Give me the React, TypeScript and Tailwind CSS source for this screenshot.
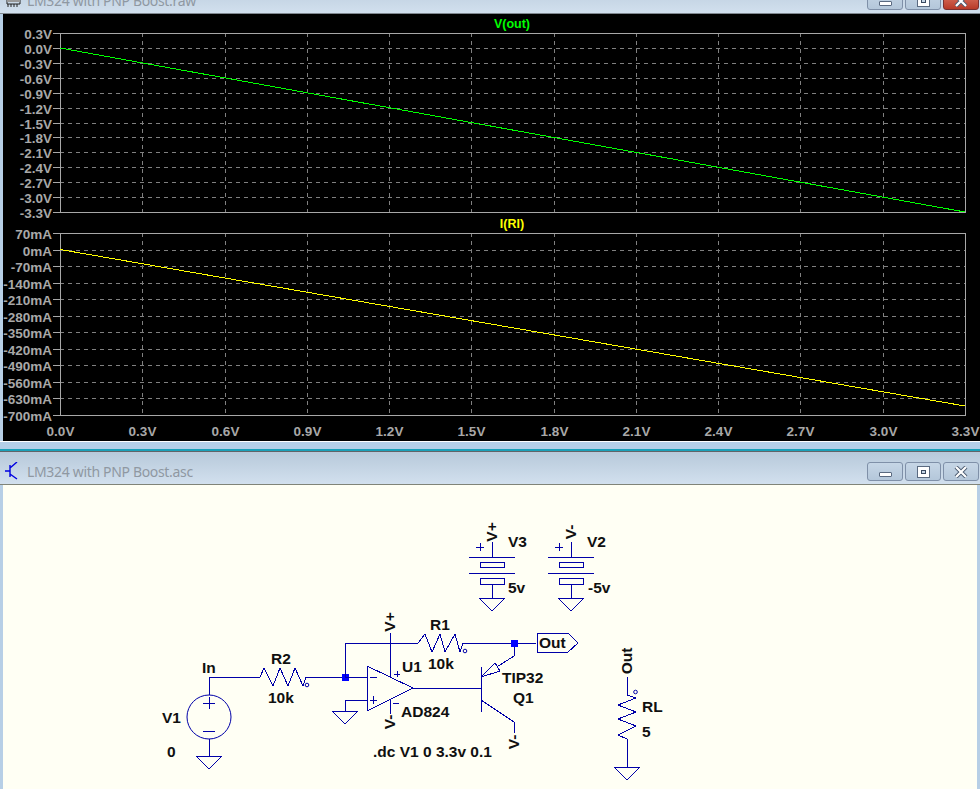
const xTicks = ['0.0V', '0.3V', '0.6V', '0.9V', '1.2V', '1.5V', '1.8V', '2.1V', '2.4V', '2.7V', '3.0V', '3.3V'];
const voltTicks = ['0.3V', '0.0V', '-0.3V', '-0.6V', '-0.9V', '-1.2V', '-1.5V', '-1.8V', '-2.1V', '-2.4V', '-2.7V', '-3.0V', '-3.3V'];
const ampTicks = ['70mA', '0mA', '-70mA', '-140mA', '-210mA', '-280mA', '-350mA', '-420mA', '-490mA', '-560mA', '-630mA', '-700mA'];

const X0 = 60;
const X1 = 965;
const xAt = (i: number) => Math.round(X0 + (i * (X1 - X0)) / 11) + 0.5;

function Plot({ top, bottom, ticks, title, color, from, to }: {
  top: number;
  bottom: number;
  ticks: string[];
  title: string;
  color: string;
  from: number;
  to: number;
}) {
  const step = (bottom - top) / (ticks.length - 1);
  return (
    <g>
      <text x={512} y={top - 5} textAnchor="middle" fill={color} className="text-[12.5px] font-bold">{title}</text>
      {xTicks.slice(1, -1).map((t, i) => (
        <line key={t} x1={xAt(i + 1)} x2={xAt(i + 1)} y1={top} y2={bottom} stroke="#808080" strokeDasharray="4 4" />
      ))}
      {ticks.map((t, i) => {
        const y = Math.round(top + i * step) + 0.5;
        return (
          <g key={t}>
            {i > 0 && i < ticks.length - 1 && (
              <line x1={X0} x2={X1} y1={y} y2={y} stroke="#808080" strokeDasharray="4 4" />
            )}
            <line x1={X0 - 7} x2={X0} y1={y} y2={y} stroke="#a8a8a8" />
            <text x={X0 - 8} y={y + 5} textAnchor="end" className="fill-[#a8a8a8] text-[13.5px] font-bold">{t}</text>
          </g>
        );
      })}
      <rect x={X0 + 0.5} y={top + 0.5} width={X1 - X0} height={bottom - top} fill="none" stroke="#a8a8a8" />
      <line x1={X0} y1={from} x2={X1} y2={to} stroke={color} shapeRendering="crispEdges" />
    </g>
  );
}

function WaveformPane() {
  return (
    <div className="h-[427px] ml-[3px] bg-black">
      <svg viewBox="3 14 977 427" className="block w-[977px] h-[427px]">
        <Plot top={33} bottom={212} ticks={voltTicks} title="V(out)" color="#00ff00" from={48} to={212} />
        <Plot top={233} bottom={415} ticks={ampTicks} title="I(RI)" color="#ffff00" from={249.5} to={406} />
        {xTicks.map((t, i) => (
          <text key={t} x={xAt(i)} y={436} textAnchor="middle" className="fill-[#a8a8a8] text-[13.5px] font-bold">{t}</text>
        ))}
      </svg>
    </div>
  );
}

const WIRE = '#0000a8';

function Ground({ x, y }: { x: number; y: number }) {
  return <polygon points={`${x - 13},${y} ${x + 13},${y} ${x},${y + 13}`} fill="none" stroke={WIRE} />;
}

function Label({ x, y, rotate, children }: { x: number; y: number; rotate?: boolean; children: string }) {
  return (
    <text
      x={x}
      y={y}
      textAnchor={rotate ? 'middle' : 'start'}
      transform={rotate ? `rotate(-90 ${x} ${y})` : undefined}
      className="fill-[#101010] text-[15.5px] font-bold"
    >
      {children}
    </text>
  );
}

function Battery({ x, sign, name, value, valueX }: { x: number; sign: string; name: string; value: string; valueX: number }) {
  return (
    <g>
      <g shapeRendering="crispEdges">
        <path d={`M${x} 542V557M${x - 23} 557H${x + 23}M${x - 23} 573H${x + 23}M${x} 584V598M${x - 16} 547H${x - 8}M${x - 12} 543V551`} fill="none" stroke={WIRE} />
        <rect x={x - 12} y={562} width={24} height={5} fill="none" stroke={WIRE} />
        <rect x={x - 12} y={578} width={24} height={6} fill="none" stroke={WIRE} />
        <Ground x={x} y={598} />
      </g>
      <Label x={x + 5} y={532} rotate>{sign}</Label>
      <Label x={x + 16} y={547}>{name}</Label>
      <Label x={valueX} y={593}>{value}</Label>
    </g>
  );
}

function SchematicPane() {
  return (
    <div className="h-[304px] mx-[3px] bg-[#fffff4]">
      <svg viewBox="3 485 974 304" className="block w-[974px] h-[304px]">
        <Battery x={492} sign="V+" name="V3" value="5v" valueX={508} />
        <Battery x={571} sign="V-" name="V2" value="-5v" valueX={588} />

        <g shapeRendering="crispEdges">
          {/* V1 source and input resistor */}
          <path d="M203 703H215M209 697V709M203 731H215M209 695V677H260L264 668L273 686L280 668L288 686L295 668L303 686L306 677H345M209 739V756" fill="none" stroke={WIRE} />
          <Ground x={209} y={756} />
          <rect x={342} y={674} width={7} height={7} fill="#0000ff" />

          {/* op amp */}
          <polygon points="367,666 413,688 367,711" fill="none" stroke={WIRE} />
          <path d="M345 677V643H418L425 634L432 652L440 634L445 652L455 634L460 652L463 643H536M345 677H367M367 700H345V711M370 677H377M370 700H377M373 696V704M390 633V677M390 700V714M394 674H400M397 671V677M393 703H399" fill="none" stroke={WIRE} />
          <Ground x={345} y={711} />

          {/* transistor */}
          <path d="M413 688H481M481 667V712M481 677L514 656V643M481 700L514 722V733" fill="none" stroke={WIRE} />
          <polygon points="481,677 495,663 500,671" fill="#fffff4" stroke={WIRE} />
          <rect x={511} y={640} width={7} height={7} fill="#0000ff" />

          {/* out flag */}
          <polygon points="537,633 568,633 578,643 568,652 537,652" fill="none" stroke={WIRE} />

          {/* load */}
          <path d="M627 677V695L636 698L618 705L636 712L618 719L636 726L618 735L627 739V767" fill="none" stroke={WIRE} />
          <Ground x={627} y={767} />
        </g>

        {/* source body and the polarity dots read better smoothed */}
        <circle cx={209} cy={717} r={22} fill="none" stroke={WIRE} />
        <circle cx={307} cy={685} r={1.8} fill="none" stroke={WIRE} />
        <circle cx={465} cy={651} r={1.8} fill="none" stroke={WIRE} />
        <circle cx={635.5} cy={692} r={1.8} fill="none" stroke={WIRE} />

        <Label x={202} y={673}>In</Label>
        <Label x={271} y={664}>R2</Label>
        <Label x={268} y={703}>10k</Label>
        <Label x={162} y={723}>V1</Label>
        <Label x={167} y={757}>0</Label>
        <Label x={395} y={622} rotate>V+</Label>
        <Label x={395} y={722} rotate>V-</Label>
        <Label x={402} y={672}>U1</Label>
        <Label x={401} y={717}>AD824</Label>
        <Label x={430} y={630}>R1</Label>
        <Label x={428} y={669}>10k</Label>
        <Label x={502} y={683}>TIP32</Label>
        <Label x={513} y={703}>Q1</Label>
        <Label x={519} y={742} rotate>V-</Label>
        <Label x={539} y={648}>Out</Label>
        <Label x={373} y={757}>.dc V1 0 3.3v 0.1</Label>
        <Label x={632} y={661} rotate>Out</Label>
        <Label x={642} y={712}>RL</Label>
        <Label x={642} y={737}>5</Label>
      </svg>
    </div>
  );
}

function TitleButtons({ closeRed }: { closeRed?: boolean }) {
  const base = 'flex h-[19px] w-[36px] items-center justify-center rounded-[3px] border bg-gradient-to-b';
  const plain = 'border-[#7f90a8] from-[#c6d6e6] to-[#b4c7da]';
  return (
    <div className="mb-[3px] flex gap-[2px] pr-[1px]">
      <div className={`${base} ${plain}`}>
        <div className="mt-[5px] h-[5px] w-[13px] rounded-[1px] border border-[#5a6a80] bg-white" />
      </div>
      <div className={`${base} ${plain}`}>
        <div className="flex h-[12px] w-[13px] items-center justify-center border border-[#5a6a80] bg-white">
          <div className="h-[4px] w-[5px] border border-[#3a4a60] bg-[#c6d6e6]" />
        </div>
      </div>
      <div className={`${base} ${closeRed ? 'border-[#7a3030] from-[#e07a68] to-[#b83a28]' : plain}`}>
        <svg viewBox="0 0 14 12" className="h-[12px] w-[14px]">
          <path d="M2 1L12 11M12 1L2 11" stroke="#4a5a70" strokeWidth={4} />
          <path d="M2 1L12 11M12 1L2 11" stroke="#ffffff" strokeWidth={2.2} />
        </svg>
      </div>
    </div>
  );
}

function WindowTitle({ icon, title, closeRed, className }: { icon: React.ReactNode; title: string; closeRed?: boolean; className: string }) {
  return (
    <div className={`flex h-[32px] items-end justify-between bg-gradient-to-b from-[#b7c9da] to-[#d2e0ee] ${className}`}>
      <div className="flex h-full items-center pt-[6px]">
        <div className="ml-[5px] w-[22px]">{icon}</div>
        <span className="text-[14px] tracking-[-0.33px] text-[#8f98a2] font-['Noto_Sans',sans-serif]">{title}</span>
      </div>
      <TitleButtons closeRed={closeRed} />
    </div>
  );
}

const chipIcon = (
  <svg viewBox="0 0 16 16" className="block h-[16px] w-[16px]">
    <path d="M2 12H15M3 12V15M6 12V15M9 12V15M12 12V15M2 2V12M15 2V12" stroke="#222" fill="none" />
    <rect x={2} y={2} width={13} height={8} fill="#999" />
  </svg>
);

const transistorIcon = (
  <svg viewBox="0 0 14 18" className="block h-[18px] w-[14px]">
    <path d="M0 9H5M5 3V15M5 6L12 0M5 12L12 17" stroke="#0000e0" strokeWidth={1.4} fill="none" />
  </svg>
);

export default function App() {
  return (
    <div className="h-[789px] w-[980px] overflow-hidden bg-[#b7cfe6] font-['Liberation_Sans',sans-serif]">
      <WindowTitle icon={chipIcon} title="LM324 with PNP Boost.raw" closeRed className="-mt-[19px]" />
      <div className="h-px bg-[#808890]" />
      <WaveformPane />
      <div className="h-px bg-white" />
      <div className="h-[7px] bg-[#b4cfe8]" />
      <div className="h-[2px] bg-[#1aa0b8]" />
      <div className="h-[1px] bg-[#606468]" />
      <WindowTitle icon={transistorIcon} title="LM324 with PNP Boost.asc" className="" />
      <div className="h-px bg-[#808478]" />
      <SchematicPane />
    </div>
  );
}
